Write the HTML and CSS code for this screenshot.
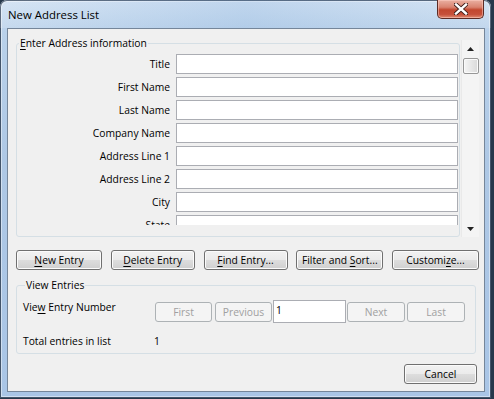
FILE: index.html
```html
<!DOCTYPE html>
<html lang="en">
<head>
    <meta charset="UTF-8">
    <meta name="viewport" content="width=device-width, initial-scale=1.0">
    <title>New Address List</title>
    <link rel="stylesheet" href="styles.css">
</head>
<body>
    <div class="window">
        <!-- Barra de titulo -->
        <div class="titlebar">
            <span class="title">New Address List</span>
            <button class="close-btn" type="button" aria-label="Close">
                <svg width="14" height="12" viewBox="0 0 14 12">
                    <path d="M2 1.5 L12 10.5 M12 1.5 L2 10.5" stroke="#3b1a16" stroke-width="4.2" stroke-linecap="square"/>
                    <path d="M2 1.5 L12 10.5 M12 1.5 L2 10.5" stroke="#ffffff" stroke-width="2.4" stroke-linecap="square"/>
                </svg>
            </button>
        </div>

        <div class="client">
            <!-- Datos de la direccion -->
            <div class="address-pane">
                <fieldset class="group address-group">
                    <legend><u>E</u>nter Address information</legend>
                    <div class="fields">
                        <label for="f_title">Title</label>
                        <input type="text" id="f_title">

                        <label for="f_first">First Name</label>
                        <input type="text" id="f_first">

                        <label for="f_last">Last Name</label>
                        <input type="text" id="f_last">

                        <label for="f_company">Company Name</label>
                        <input type="text" id="f_company">

                        <label for="f_addr1">Address Line 1</label>
                        <input type="text" id="f_addr1">

                        <label for="f_addr2">Address Line 2</label>
                        <input type="text" id="f_addr2">

                        <label for="f_city">City</label>
                        <input type="text" id="f_city">

                        <label for="f_state">State</label>
                        <input type="text" id="f_state">
                    </div>
                </fieldset>

                <div class="scrollbar">
                    <div class="scroll-arrow">
                        <svg width="7" height="4" viewBox="0 0 7 4"><path d="M3.5 0 L7 4 L0 4 Z" fill="#222"/></svg>
                    </div>
                    <div class="scroll-thumb"></div>
                    <div class="scroll-track"></div>
                    <div class="scroll-arrow">
                        <svg width="7" height="4" viewBox="0 0 7 4"><path d="M0 0 L7 0 L3.5 4 Z" fill="#222"/></svg>
                    </div>
                </div>
            </div>

            <!-- Botones de acciones -->
            <div class="actions">
                <button type="button" class="btn w86"><u>N</u>ew Entry</button>
                <button type="button" class="btn w84"><u>D</u>elete Entry</button>
                <button type="button" class="btn w84"><u>F</u>ind Entry...</button>
                <button type="button" class="btn w87">Filter and <u>S</u>ort...</button>
                <button type="button" class="btn w87">Customi<u>z</u>e...</button>
            </div>

            <!-- Navegacion de entradas -->
            <fieldset class="group view-group">
                <legend>View Entries</legend>
                <div class="view-grid">
                    <span class="view-label">Vie<u>w</u> Entry Number</span>
                    <div class="nav">
                        <button type="button" class="btn nav-btn first" disabled>First</button>
                        <button type="button" class="btn nav-btn prev" disabled>Previous</button>
                        <input type="text" class="nav-input" value="1">
                        <button type="button" class="btn nav-btn next" disabled>Next</button>
                        <button type="button" class="btn nav-btn last" disabled>Last</button>
                    </div>

                    <span class="view-label">Total entries in list</span>
                    <span class="total">1</span>
                </div>
            </fieldset>

            <div class="footer">
                <button type="button" class="btn cancel-btn">Cancel</button>
            </div>
        </div>
    </div>
</body>
</html>
```

FILE: styles.css
```css
/* Estilos generales */
* {
    box-sizing: border-box;
}

body {
    margin: 0;
    width: 494px;
    height: 399px;
    overflow: hidden;
    background-color: #26384b;
    font-family: "Open Sans", "Noto Sans", sans-serif;
    font-size: 10.3px;
    color: #000;
}

u {
    text-decoration-thickness: 1px;
    text-underline-offset: 2px;
}

/* Ventana */
.window {
    width: 491px;
    height: 398px;
    display: flex;
    flex-direction: column;
    padding: 0 6px 6px 7px;
    border-radius: 7px 7px 0 0;
    background: linear-gradient(to bottom, #cfe0f2 0%, #b9d1ea 8%, #aec8e5 40%, #a9c5e6 100%);
    box-shadow: inset 0 0 0 1px #43546a, inset 0 0 0 2px rgba(255, 255, 255, 0.45);
}

.titlebar {
    height: 28px;
    display: flex;
    align-items: flex-start;
    background: linear-gradient(to right, rgba(255, 255, 255, 0.15), rgba(150, 185, 225, 0.25) 50%, rgba(255, 255, 255, 0.1));
    margin: 0 -6px 0 -7px;
    padding: 0 6px 0 8px;
    border-radius: 7px 7px 0 0;
}

.title {
    margin-top: 7px;
    font-size: 11.4px;
    line-height: 16px;
    color: #000;
}

.close-btn {
    margin-left: auto;
    margin-right: 1px;
    width: 47px;
    height: 19px;
    padding: 0;
    display: flex;
    justify-content: center;
    align-items: center;
    border: 1px solid #5c2b25;
    border-top: none;
    border-radius: 0 0 5px 5px;
    background: linear-gradient(to bottom, #eab0a2 0%, #d98370 40%, #c2472f 55%, #c6503a 80%, #df8b72 100%);
    box-shadow: inset 0 0 0 1px rgba(255, 210, 200, 0.5);
}

.client {
    flex: 1;
    display: flex;
    flex-direction: column;
    align-items: flex-start;
    padding: 7px 5px 0 8px;
    background-color: #f0f0f0;
    border: 1px solid #75869a;
}

/* Cuadros de grupo */
.group {
    margin: 0;
    min-width: 0;
    border: 1px solid #d5dfe5;
    border-radius: 3px;
}

.group legend {
    margin-left: 2px;
    padding: 0 1px;
    line-height: 15px;
}

.address-pane {
    display: flex;
    gap: 1px;
}

.address-group {
    width: 444px;
    padding: 3px 1px 10px 0;
}

.fields {
    display: grid;
    grid-template-columns: 153px 1fr;
    column-gap: 6px;
    row-gap: 3px;
    height: 171px;
    overflow: hidden;
    align-content: start;
}

.fields label {
    text-align: right;
    line-height: 20px;
    white-space: nowrap;
}

.fields input,
.nav-input {
    height: 20px;
    margin: 0;
    padding: 0 3px;
    border: 1px solid #abadb3;
    border-radius: 0;
    background-color: #fff;
    font-family: inherit;
    font-size: 10.3px;
}

/* Barra de desplazamiento */
.scrollbar {
    margin-top: 4px;
    width: 18px;
    height: 197px;
    display: flex;
    flex-direction: column;
    align-items: center;
    background-color: #f4f4f4;
    border-left: 1px solid #e9e9e9;
}

.scroll-arrow {
    height: 17px;
    width: 100%;
    display: flex;
    justify-content: center;
    align-items: center;
}

.scroll-thumb {
    width: 16px;
    height: 16px;
    margin-top: 1px;
    border: 1px solid #979797;
    border-radius: 2px;
    background: linear-gradient(to right, #f5f5f5, #e4e4e4 60%, #d9d9d9);
    box-shadow: inset 0 0 0 1px #fafafa;
}

.scroll-track {
    flex: 1;
}

/* Botones */
.btn {
    height: 20px;
    padding: 0;
    border: 1px solid #707070;
    border-radius: 3px;
    background: linear-gradient(to bottom, #f2f2f2 0%, #ebebeb 48%, #dddddd 52%, #cfcfcf 100%);
    box-shadow: inset 0 0 0 1px #fbfbfb;
    font-family: inherit;
    font-size: 10.3px;
    color: #000;
    white-space: nowrap;
}

.btn:disabled {
    border-color: #adb2b5;
    background: #f4f4f4;
    box-shadow: none;
    color: #a0a0a0;
}

.w84 { width: 84px; }
.w86 { width: 86px; }
.w87 { width: 87px; }

.actions {
    margin-top: 13px;
    width: 463px;
    display: flex;
    justify-content: space-between;
}

.view-group {
    margin-top: 8px;
    width: 460px;
    padding: 7px 0 4px 6px;
}

.view-grid {
    display: grid;
    grid-template-columns: 131px auto;
    row-gap: 11px;
    justify-content: start;
}

.view-label,
.total {
    line-height: 15px;
    white-space: nowrap;
}

.nav {
    display: flex;
    align-items: center;
    padding-left: 1px;
}

.nav-btn {
    width: 57px;
}

.nav-btn.prev {
    margin-left: 3px;
}

.nav-input {
    width: 73px;
    height: 23px;
    margin-left: 1px;
    padding: 0 2px 3px;
}

.nav-btn.next {
    margin-left: 1px;
    width: 58px;
}

.nav-btn.last {
    margin-left: 2px;
    width: 58px;
}

.footer {
    margin-top: 10px;
    align-self: stretch;
    display: flex;
    justify-content: flex-end;
    padding-right: 2px;
}

.cancel-btn {
    width: 73px;
}
```
